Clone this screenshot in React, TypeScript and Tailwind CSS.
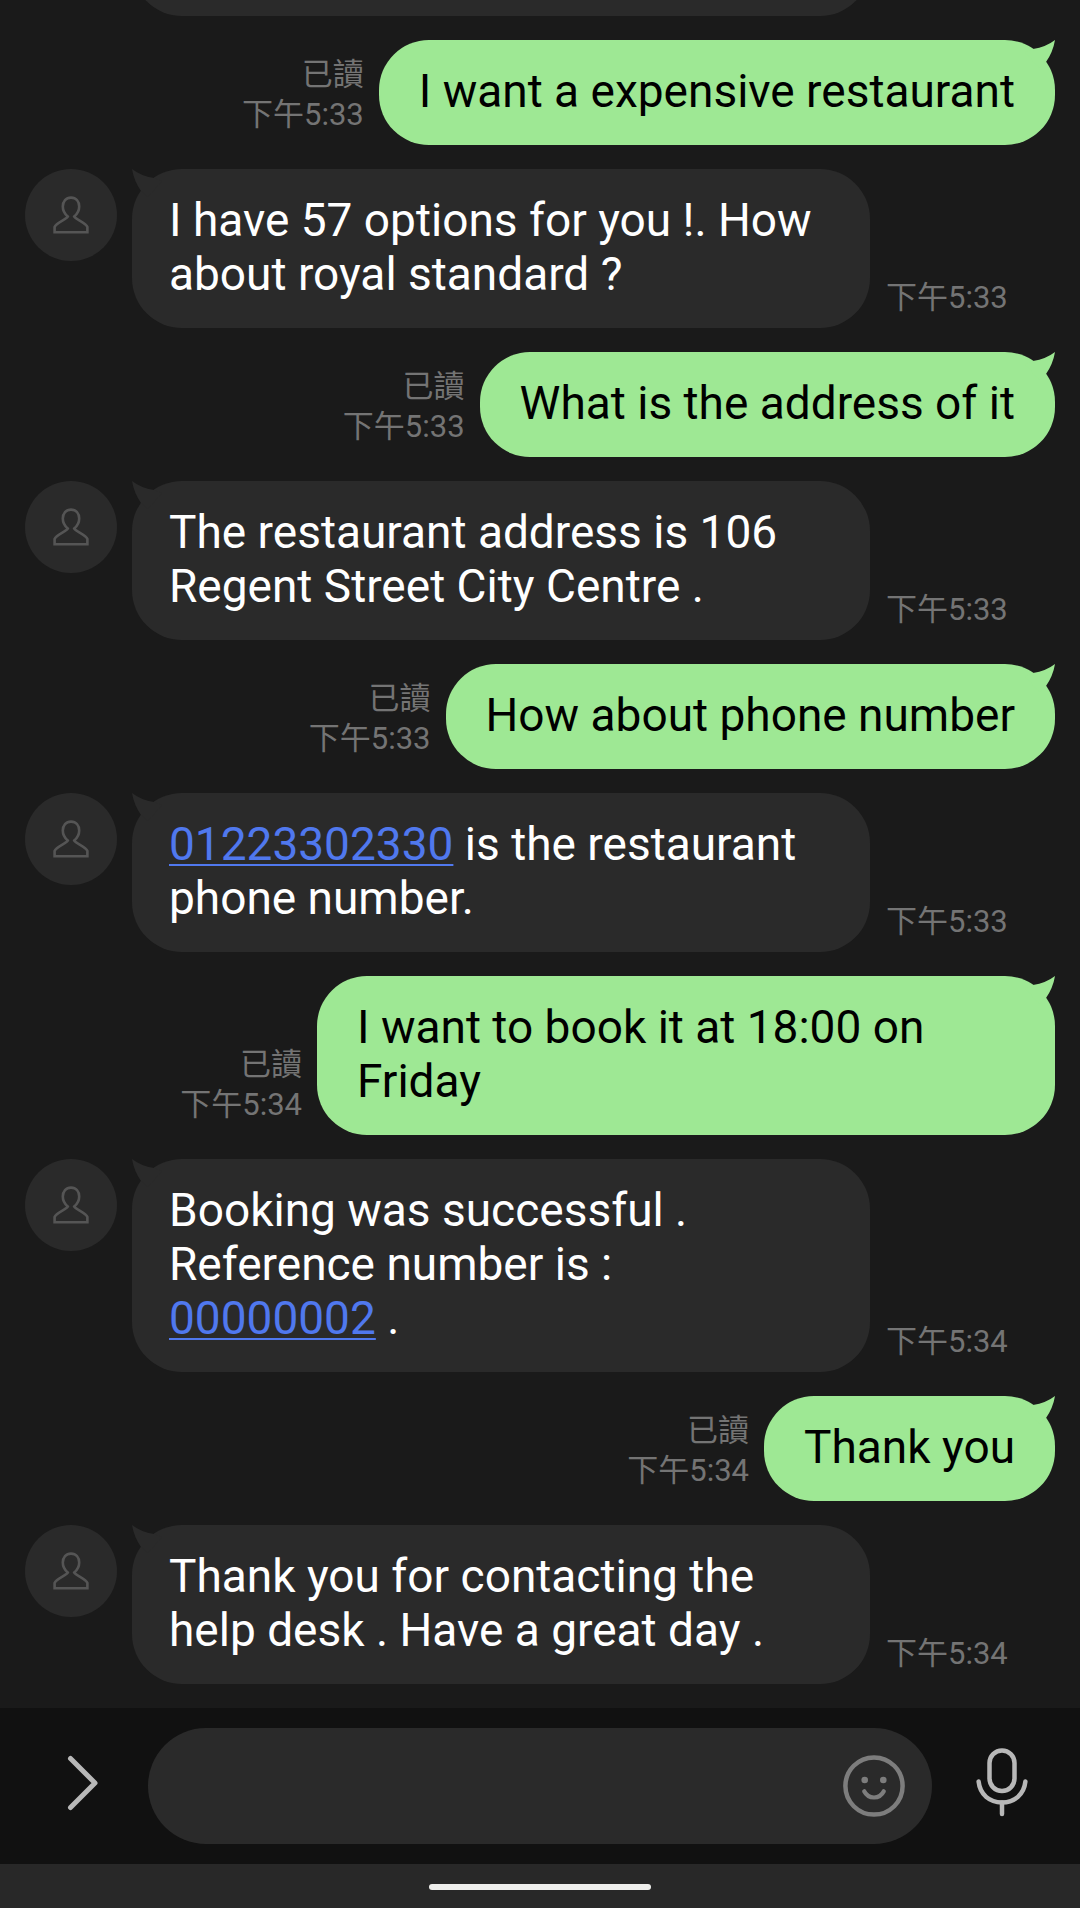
import type { ReactNode } from "react";

type Message = {
  from: "me" | "bot";
  time?: string;
  body?: ReactNode;
};

const linkClass = "text-[#5078ee] underline decoration-2 underline-offset-4";

const messages: Message[] = [
  { from: "bot" },
  { from: "me", time: "下午5:33", body: "I want a expensive restaurant" },
  {
    from: "bot",
    time: "下午5:33",
    body: "I have 57 options for you !. How about royal standard ?",
  },
  { from: "me", time: "下午5:33", body: "What is the address of it" },
  {
    from: "bot",
    time: "下午5:33",
    body: "The restaurant address is 106 Regent Street City Centre .",
  },
  { from: "me", time: "下午5:33", body: "How about phone number" },
  {
    from: "bot",
    time: "下午5:33",
    body: (
      <>
        <a href="tel:01223302330" className={linkClass}>
          01223302330
        </a>{" "}
        is the restaurant phone number.
      </>
    ),
  },
  { from: "me", time: "下午5:34", body: "I want to book it at 18:00 on Friday" },
  {
    from: "bot",
    time: "下午5:34",
    body: (
      <>
        Booking was successful .<br />
        Reference number is :<br />
        <a href="tel:00000002" className={linkClass}>
          00000002
        </a>{" "}
        .
      </>
    ),
  },
  { from: "me", time: "下午5:34", body: "Thank you" },
  {
    from: "bot",
    time: "下午5:34",
    body: "Thank you for contacting the help desk . Have a great day .",
  },
];

function Avatar() {
  return (
    <div className="flex size-[92px] shrink-0 items-center justify-center rounded-full bg-[#2a2a2a]">
      <svg viewBox="0 0 36 38" className="h-[38px] w-9" fill="none" stroke="#555555" strokeWidth="2.6">
        <path d="M14.8 20.6C11.4 17.8 9.8 14.6 9.8 10.6C9.8 5.2 13 1.6 18 1.6S26.2 5.2 26.2 10.6C26.2 14.6 24.6 17.8 21.2 20.6C22.4 23.6 32.6 26.4 34.4 31V36.2H1.6V31C3.4 26.4 13.6 23.6 14.8 20.6Z" />
      </svg>
    </div>
  );
}

function Tail({ side }: { side: "left" | "right" }) {
  return (
    <svg
      viewBox="0 0 30 30"
      className={
        side === "left"
          ? "absolute top-0 left-0 size-[30px] fill-[#2a2a2a]"
          : "absolute top-0 right-0 size-[30px] -scale-x-100 fill-[#9ee894]"
      }
    >
      <path d="M0 0Q9 7 22 9L30 12L16 28L9 22Q2 12 0 0Z" />
    </svg>
  );
}

function Received({ message }: { message: Message }) {
  return (
    <li className="flex items-end pl-[25px]">
      <div className="mr-[15px] self-start">
        <Avatar />
      </div>
      <div className="relative min-h-[159px] w-[738px] rounded-[50px] bg-[#2a2a2a] px-[37px] pt-6 pb-[27px] text-white">
        <Tail side="left" />
        {message.body}
      </div>
      <time className="mb-[10px] ml-4 shrink-0 text-[31px] leading-10 text-[#747474]">{message.time}</time>
    </li>
  );
}

function Sent({ message }: { message: Message }) {
  return (
    <li className="flex items-end justify-end pr-[25px]">
      <div className="mr-[15px] mb-[10px] flex shrink-0 flex-col items-end text-[31px] leading-10 text-[#747474]">
        <span>已讀</span>
        <time>{message.time}</time>
      </div>
      <div className="relative max-w-[738px] rounded-[50px] bg-[#9ee894] px-10 pt-6 pb-[27px] text-black">
        <Tail side="right" />
        {message.body}
      </div>
    </li>
  );
}

function Composer() {
  return (
    <form className="flex shrink-0 items-center bg-[#111111] py-5" onSubmit={(e) => e.preventDefault()}>
      <button type="button" aria-label="More" className="flex w-[148px] shrink-0 justify-center">
        <svg
          viewBox="0 0 64 64"
          className="size-16"
          fill="none"
          stroke="#b8b8b8"
          strokeWidth="5"
          strokeLinecap="round"
          strokeLinejoin="round"
        >
          <path d="M28.5 4.5L53 29L28.5 53.5" />
        </svg>
      </button>
      <div className="flex h-[116px] min-w-0 flex-1 items-center rounded-full bg-[#2a2a2a] pr-[27px] pl-10">
        <input type="text" aria-label="Message" className="min-w-0 flex-1 bg-transparent text-white outline-none" />
        <button type="button" aria-label="Emoji" className="shrink-0">
          <svg
            viewBox="0 0 62 62"
            className="size-[62px]"
            fill="none"
            stroke="#7d7d7d"
            strokeWidth="4.5"
            strokeLinecap="round"
          >
            <circle cx="31" cy="31" r="28.6" />
            <path d="M21.2 36.3C25.4 44.6 36.6 44.6 40.8 36.3" strokeWidth="4.2" />
            <circle cx="21.7" cy="25" r="3.3" fill="#7d7d7d" stroke="none" />
            <circle cx="40.3" cy="25" r="3.3" fill="#7d7d7d" stroke="none" />
          </svg>
        </button>
      </div>
      <button type="button" aria-label="Voice message" className="flex w-[148px] shrink-0 justify-center">
        <svg
          viewBox="0 0 80 80"
          className="size-20"
          fill="none"
          stroke="#b8b8b8"
          strokeWidth="4.5"
          strokeLinecap="round"
        >
          <rect x="23.5" y="4.4" width="25" height="40.6" rx="12.5" />
          <path d="M12.6 35.6C14 48.6 23.4 56.4 36 56.4S58 48.6 59.4 35.6" />
          <path d="M36 56.4V68" />
        </svg>
      </button>
    </form>
  );
}

export default function App() {
  return (
    <main className="flex h-screen flex-col bg-[#1a1a1a] font-[Roboto,'Noto_Sans_CJK_TC',sans-serif] text-[46px] leading-[54px]">
      <ol className="flex min-h-0 flex-1 flex-col justify-end gap-6 overflow-hidden pb-6">
        {messages.map((message, i) =>
          message.from === "me" ? <Sent key={i} message={message} /> : <Received key={i} message={message} />,
        )}
      </ol>
      <Composer />
      <div className="flex h-11 shrink-0 justify-center bg-[#282828] pt-5">
        <div className="h-1.5 w-[222px] rounded-full bg-[#eeeeec]" />
      </div>
    </main>
  );
}
